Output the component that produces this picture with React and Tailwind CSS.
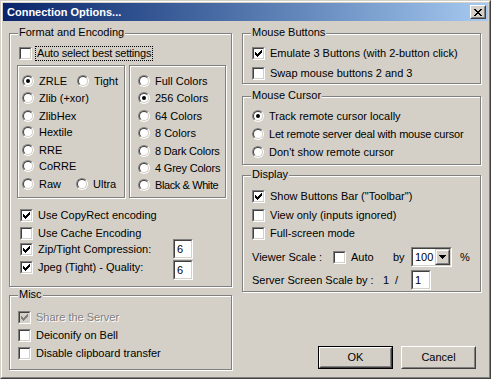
import React from "react";

function Check({ checked, disabled }) {
  return (
    <div className="w-[13px] h-[13px] shrink-0 border border-t-[#808080] border-l-[#808080] border-r-white border-b-white">
      <div
        className={
          "w-full h-full flex items-center justify-center border border-t-[#404040] border-l-[#404040] border-r-[#d4d0c8] border-b-[#d4d0c8] " +
          (disabled ? "bg-[#d4d0c8]" : "bg-white")
        }
      >
        {checked && (
          <svg width="7" height="7" viewBox="0 0 7 7" shapeRendering="crispEdges">
            <path
              d="M0 2h1v3h-1z M1 3h1v3h-1z M2 4h1v3h-1z M3 3h1v3h-1z M4 2h1v3h-1z M5 1h1v3h-1z M6 0h1v3h-1z"
              fill={disabled ? "#808080" : "#000"}
            />
          </svg>
        )}
      </div>
    </div>
  );
}

function Radio({ checked }) {
  return (
    <div className="w-[12px] h-[12px] shrink-0 rounded-full border border-t-[#808080] border-l-[#808080] border-r-white border-b-white">
      <div className="w-full h-full rounded-full flex items-center justify-center bg-white border border-t-[#404040] border-l-[#404040] border-r-[#d4d0c8] border-b-[#d4d0c8]">
        {checked && <div className="w-[4px] h-[4px] rounded-full bg-black" />}
      </div>
    </div>
  );
}

function Group({ title, className, children }) {
  return (
    <div
      className={
        "relative border border-[#808080] shadow-[inset_1px_1px_0_#fff,1px_1px_0_#fff] " +
        className
      }
    >
      {title && (
        <span className="absolute left-[8px] top-[-8px] bg-[#d4d0c8] px-[1px] leading-[13px] whitespace-nowrap">
          {title}
        </span>
      )}
      {children}
    </div>
  );
}

function Field({ value, w }) {
  return (
    <div className={"h-[20px] shrink-0 border border-t-[#808080] border-l-[#808080] border-r-white border-b-white " + w}>
      <div className="h-full bg-white pl-[2px] leading-[16px] border border-t-[#404040] border-l-[#404040] border-r-[#d4d0c8] border-b-[#d4d0c8]">
        {value}
      </div>
    </div>
  );
}

function Button({ label, isDefault }) {
  const inner = (
    <div className="w-full h-full border border-t-white border-l-white border-r-[#404040] border-b-[#404040]">
      <div className="w-full h-full flex items-center justify-center border border-t-[#d4d0c8] border-l-[#d4d0c8] border-r-[#808080] border-b-[#808080]">
        {label}
      </div>
    </div>
  );
  return isDefault ? (
    <div className="w-[75px] h-[23px] border border-black">{inner}</div>
  ) : (
    <div className="w-[75px] h-[23px]">{inner}</div>
  );
}

function CheckRow({ checked, disabled, label, className }) {
  return (
    <div className={"flex items-center h-[13px] " + (className || "")}>
      <Check checked={checked} disabled={disabled} />
      <span
        className={
          "ml-[5px] whitespace-nowrap " +
          (disabled ? "text-[#808080] [text-shadow:1px_1px_0_#fff]" : "")
        }
      >
        {label}
      </span>
    </div>
  );
}

function RadioItem({ checked, label, className, textClass }) {
  return (
    <div className={"flex items-center h-[12px] " + (className || "")}>
      <Radio checked={checked} />
      <span className={"ml-[5px] whitespace-nowrap " + (textClass || "")}>{label}</span>
    </div>
  );
}

export default function App() {
  return (
    <div className="w-[491px] h-[379px] bg-[#d4d0c8] text-black font-['Liberation_Sans',Arial,sans-serif] text-[11px] leading-[13px] border border-t-[#d4d0c8] border-l-[#d4d0c8] border-r-[#404040] border-b-[#404040] overflow-hidden">
      <div className="w-full h-full border border-t-white border-l-white border-r-[#808080] border-b-[#808080] p-[1px]">
        {/* Title bar */}
        <div className="h-[18px] flex items-center bg-gradient-to-r from-[#0a246a] to-[#a6caf0] pl-[4px] pr-[2px]">
          <span className="text-white font-bold text-[11px] whitespace-nowrap">Connection Options...</span>
          <div className="ml-auto w-[16px] h-[14px] border border-t-white border-l-white border-r-[#404040] border-b-[#404040]">
            <div className="w-full h-full flex items-center justify-center bg-[#d4d0c8] border border-t-[#d4d0c8] border-l-[#d4d0c8] border-r-[#808080] border-b-[#808080]">
              <svg width="8" height="7" viewBox="0 0 8 7" shapeRendering="crispEdges">
                <path
                  d="M0 0h2v1h-2z M6 0h2v1h-2z M1 1h2v1h-2z M5 1h2v1h-2z M2 2h4v1h-4z M3 3h2v1h-2z M2 4h4v1h-4z M1 5h2v1h-2z M5 5h2v1h-2z M0 6h2v1h-2z M6 6h2v1h-2z"
                  fill="#000"
                />
              </svg>
            </div>
          </div>
        </div>

        {/* Body */}
        <div className="flex pl-[6px] pt-[12px] gap-[10px]">
          {/* Left column */}
          <div className="w-[223px] flex flex-col">
            <Group title="Format and Encoding" className="h-[254px]">
              <div className="mt-[11px] h-[16px] flex items-center pl-[9px]">
                <Check />
                <span className="ml-[3px] border border-dotted border-black px-[1px] leading-[13px] whitespace-nowrap tracking-[-0.2px]">
                  Auto select best settings
                </span>
              </div>
              <div className="mt-[4px] flex pl-[7px] gap-[4px]">
                <Group className="w-[108px] h-[133px]">
                  <div className="pt-[9px] pl-[4px] flex flex-col">
                    <div className="flex h-[12px]">
                      <RadioItem checked label="ZRLE" className="w-[55px]" />
                      <RadioItem label="Tight" />
                    </div>
                    <RadioItem label="Zlib (+xor)" className="mt-[5px]" />
                    <RadioItem label="ZlibHex" className="mt-[6px]" />
                    <RadioItem label="Hextile" className="mt-[4px]" />
                    <RadioItem label="RRE" className="mt-[6px]" />
                    <RadioItem label="CoRRE" className="mt-[4px]" />
                    <div className="flex h-[12px] mt-[6px]">
                      <RadioItem label="Raw" className="w-[54px]" />
                      <RadioItem label="Ultra" />
                    </div>
                  </div>
                </Group>
                <Group className="w-[97px] h-[133px]">
                  <div className="pt-[9px] pl-[8px] flex flex-col">
                    <RadioItem label="Full Colors" />
                    <RadioItem checked label="256 Colors" className="mt-[5px]" />
                    <RadioItem label="64 Colors" className="mt-[6px]" />
                    <RadioItem label="8 Colors" className="mt-[5px]" />
                    <RadioItem label="8 Dark Colors" className="mt-[6px]" textClass="tracking-[-0.2px]" />
                    <RadioItem label="4 Grey Colors" className="mt-[5px]" textClass="tracking-[-0.2px]" />
                    <RadioItem label="Black & White" className="mt-[5px]" textClass="tracking-[-0.4px]" />
                  </div>
                </Group>
              </div>
              <div className="pl-[10px] flex flex-col">
                <CheckRow checked label="Use CopyRect encoding" className="mt-[11px]" />
                <CheckRow label="Use Cache Encoding" className="mt-[5px]" />
                <div className="flex items-start h-[20px] -mt-[1px]">
                  <CheckRow checked label="Zip/Tight Compression:" className="w-[153px] mt-[4px]" />
                  <Field value="6" w="w-[20px]" />
                </div>
                <div className="flex items-start h-[20px] mt-[1px]">
                  <CheckRow checked label="Jpeg (Tight) - Quality:" className="w-[153px] mt-[1px]" />
                  <Field value="6" w="w-[20px]" />
                </div>
              </div>
            </Group>

            <Group title="Misc" className="mt-[8px] h-[75px]">
              <div className="pl-[8px] flex flex-col">
                <CheckRow checked disabled label="Share the Server" className="mt-[15px]" />
                <CheckRow label="Deiconify on Bell" className="mt-[5px]" />
                <CheckRow label="Disable clipboard transfer" className="mt-[5px]" />
              </div>
            </Group>
          </div>

          {/* Right column */}
          <div className="w-[239px] flex flex-col">
            <Group title="Mouse Buttons" className="h-[51px]">
              <div className="pl-[9px] flex flex-col">
                <CheckRow checked label="Emulate 3 Buttons (with 2-button click)" className="mt-[13px]" />
                <CheckRow label="Swap mouse buttons 2 and 3" className="mt-[7px]" />
              </div>
            </Group>

            <Group title="Mouse Cursor" className="mt-[12px] h-[69px]">
              <div className="pl-[9px] flex flex-col">
                <RadioItem checked label="Track remote cursor locally" className="mt-[13px]" />
                <RadioItem label="Let remote server deal with mouse cursor" className="mt-[6px]" textClass="tracking-[-0.2px]" />
                <RadioItem label="Don't show remote cursor" className="mt-[6px]" />
              </div>
            </Group>

            <Group title="Display" className="mt-[10px] h-[117px]">
              <div className="pl-[9px] flex flex-col">
                <CheckRow checked label='Show Buttons Bar ("Toolbar")' className="mt-[14px]" />
                <CheckRow label="View only (inputs ignored)" className="mt-[6px]" />
                <CheckRow label="Full-screen mode" className="mt-[5px]" />
                <div className="mt-[7px] h-[20px] flex items-center">
                  <span className="w-[81px] whitespace-nowrap">Viewer Scale :</span>
                  <Check />
                  <span className="ml-[5px] w-[42px]">Auto</span>
                  <span className="w-[18px]">by</span>
                  <div className="w-[41px] h-[20px] shrink-0 border border-t-[#808080] border-l-[#808080] border-r-white border-b-white">
                    <div className="h-full flex bg-white border border-t-[#404040] border-l-[#404040] border-r-[#d4d0c8] border-b-[#d4d0c8]">
                      <span className="pl-[2px] leading-[16px] flex-1">100</span>
                      <div className="w-[15px] h-full border border-t-[#d4d0c8] border-l-[#d4d0c8] border-r-[#404040] border-b-[#404040]">
                        <div className="w-full h-full flex items-center justify-center bg-[#d4d0c8] border border-t-white border-l-white border-r-[#808080] border-b-[#808080]">
                          <svg width="7" height="4" viewBox="0 0 7 4" shapeRendering="crispEdges">
                            <path d="M0 0h7v1h-7z M1 1h5v1h-5z M2 2h3v1h-3z M3 3h1v1h-1z" fill="#000" />
                          </svg>
                        </div>
                      </div>
                    </div>
                  </div>
                  <span className="ml-[8px]">%</span>
                </div>
                <div className="mt-[3px] h-[20px] flex items-center">
                  <span className="w-[131px] whitespace-nowrap">Server Screen Scale by :</span>
                  <span className="w-[12px]">1</span>
                  <span className="w-[16px]">/</span>
                  <Field value="1" w="w-[20px]" />
                </div>
              </div>
            </Group>

            <div className="mt-[54px] flex pl-[76px] gap-[8px]">
              <Button label="OK" isDefault />
              <Button label="Cancel" />
            </div>
          </div>
        </div>
      </div>
    </div>
  );
}
